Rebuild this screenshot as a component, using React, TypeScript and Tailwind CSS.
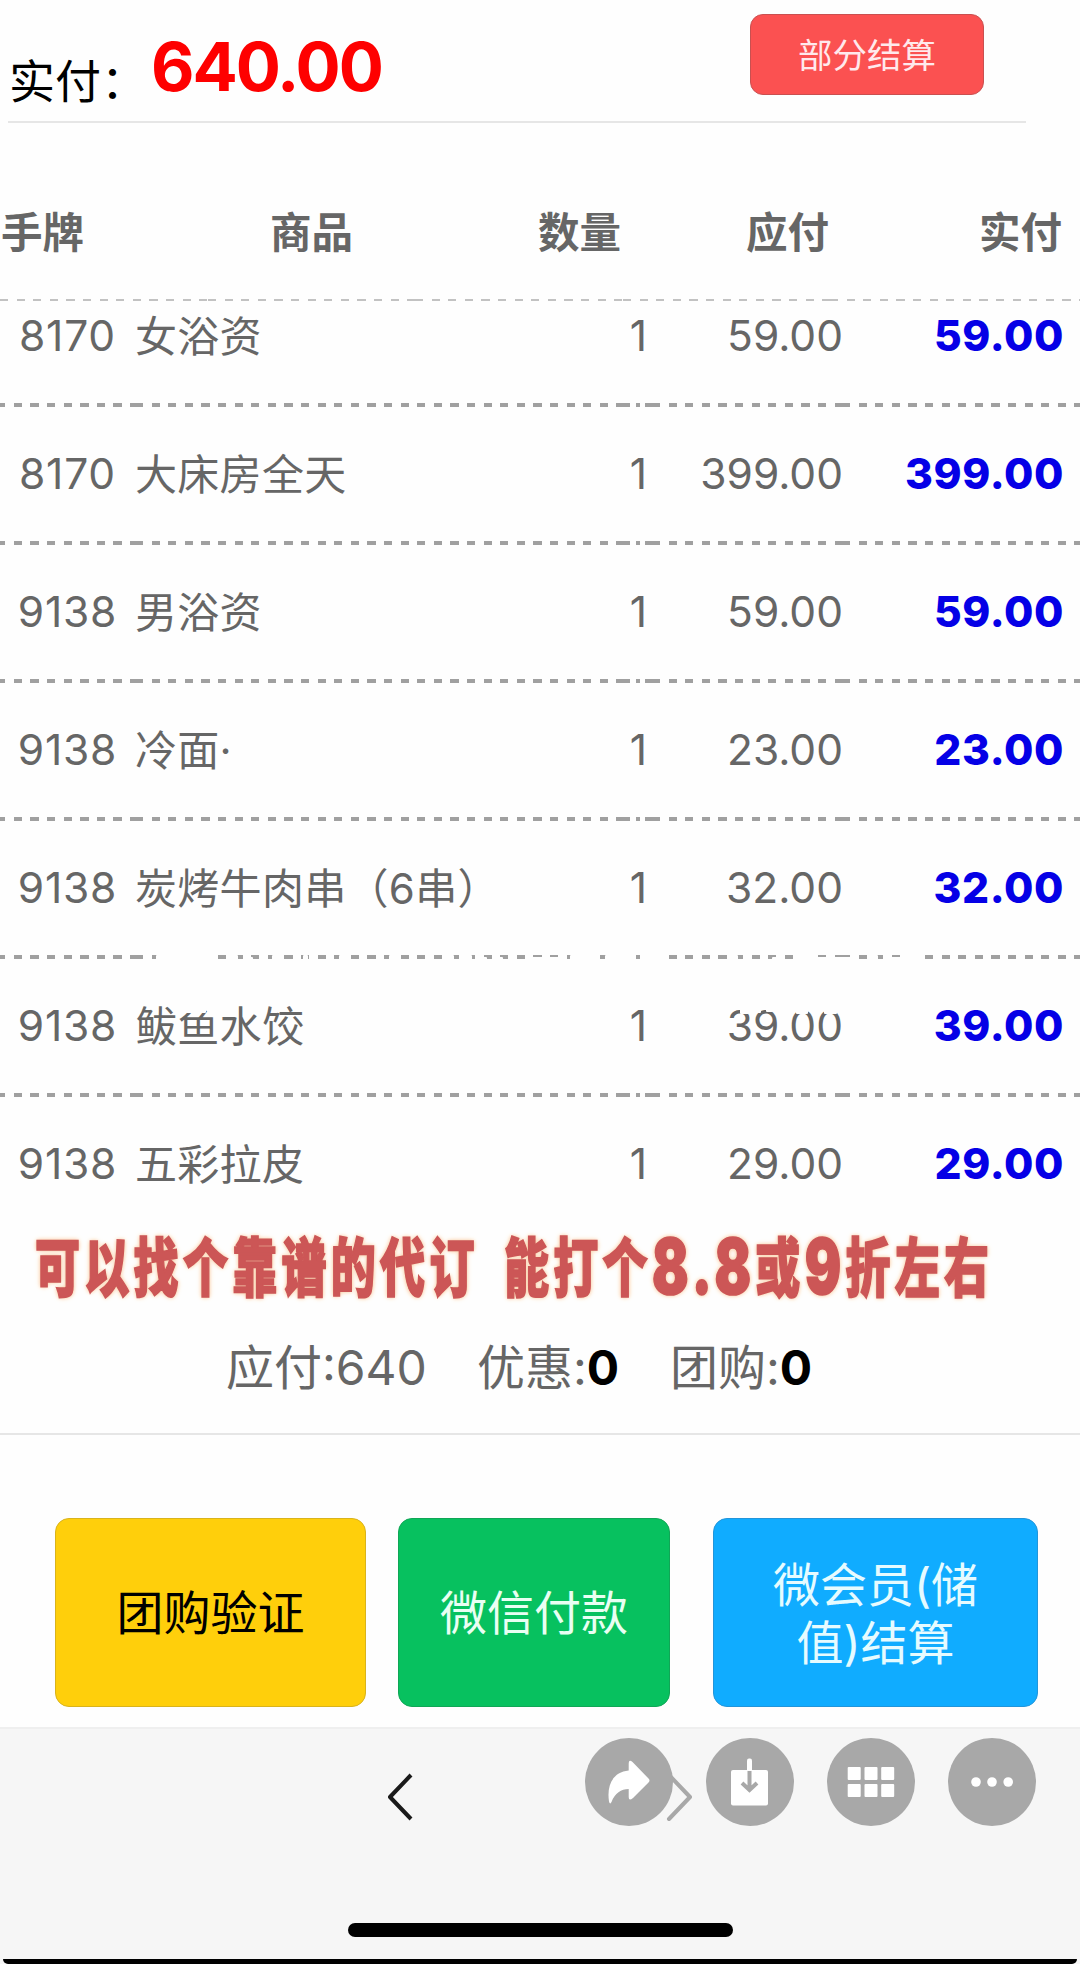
import type { ReactNode } from "react";

type ItemType = {
  tag: string;
  name: string;
  count: number;
  due: string;
  paid: string;
};

const items: Array<ItemType> = [
  { tag: "8170", name: "女浴资", count: 1, due: "59.00", paid: "59.00" },
  { tag: "8170", name: "大床房全天", count: 1, due: "399.00", paid: "399.00" },
  { tag: "9138", name: "男浴资", count: 1, due: "59.00", paid: "59.00" },
  { tag: "9138", name: "冷面·", count: 1, due: "23.00", paid: "23.00" },
  { tag: "9138", name: "炭烤牛肉串（6串）", count: 1, due: "32.00", paid: "32.00" },
  { tag: "9138", name: "鲅鱼水饺", count: 1, due: "39.00", paid: "39.00" },
  { tag: "9138", name: "五彩拉皮", count: 1, due: "29.00", paid: "29.00" },
];

// white specks lying over the list: [left, top, width, height]
const specks = [
  [156, 654, 61, 5],
  [233, 654, 5, 5],
  [247, 656, 6, 4],
  [263, 654, 5, 5],
  [272, 654, 5, 5],
  [303, 654, 5, 5],
  [339, 654, 6, 5],
  [389, 654, 6, 5],
  [449, 654, 5, 5],
  [465, 654, 7, 5],
  [475, 654, 5, 5],
  [482, 656, 5, 3],
  [498, 656, 5, 3],
  [532, 656, 32, 4],
  [570, 654, 26, 5],
  [605, 654, 31, 5],
  [640, 654, 26, 5],
  [732, 654, 6, 5],
  [772, 656, 6, 4],
  [799, 654, 12, 5],
  [815, 656, 38, 4],
  [872, 654, 6, 5],
  [883, 654, 6, 5],
  [890, 656, 12, 4],
  [904, 654, 16, 5],
  [184, 704, 22, 8],
  [740, 708, 9, 5],
  [757, 706, 4, 6],
  [766, 706, 11, 5],
  [796, 707, 12, 6],
  [824, 707, 13, 6],
];

const Dashes = () => (
  <div className="flex h-[4px] w-full">
    <div className="h-full w-[135px] bg-[repeating-linear-gradient(90deg,#a0a0a0_0_5.5px,transparent_5.5px_13.8px,#a0a0a0_13.8px_16.6px)]"></div>
    <div className="h-full w-[487px] bg-[repeating-linear-gradient(90deg,#a0a0a0_0_8.2px,transparent_8.2px_16.6px)]"></div>
    <div className="h-full w-[30px] bg-[linear-gradient(90deg,#a0a0a0_0_8px,transparent_8px_14px,#a0a0a0_14px_18px,transparent_18px_23.4px,#a0a0a0_23.4px)]"></div>
    <div className="h-full w-[189.5px] bg-[repeating-linear-gradient(90deg,#a0a0a0_0_8.2px,transparent_8.2px_16.6px)]"></div>
    <div className="h-full flex-1 bg-[repeating-linear-gradient(90deg,#a0a0a0_0_8.2px,transparent_8.2px_16.6px)]"></div>
  </div>
);

const HeadDashes = () => (
  <div className="flex h-[2px] w-full">
    {[0, 1, 2, 3, 4].map((cell) => (
      <div
        key={`head_${cell}`}
        className="h-full w-[207.5px] shrink-0 last:w-[250px] bg-[repeating-linear-gradient(90deg,#c2c2c2_0_8.2px,transparent_8.2px_16.6px)]"
      ></div>
    ))}
  </div>
);

const Item = ({ item }: { item: ItemType }) => (
  <div className="flex h-[138px] w-full shrink-0 flex-col">
    <div className="flex flex-1 items-center text-[42.5px] leading-none text-[#666]">
      <div className="w-[135px] text-center tracking-[0.8px]">{item.tag}</div>
      <div className="w-[470px] pt-[2px] text-[42px] tracking-[0.3px]">
        {item.name}
      </div>
      <div className="w-[42px] text-right">{item.count}</div>
      <div className="w-[196px] text-right">{item.due}</div>
      <div className="w-[221px] text-right font-extrabold tracking-[0.6px] text-[#0500e6]">
        {item.paid}
      </div>
    </div>
    <Dashes />
  </div>
);

const Circle = ({ children }: { children: ReactNode }) => (
  <button className="size-[88px] rounded-full bg-[#a8a8a8]">
    <svg viewBox="0 0 88 88" className="size-full" fill="#fff">
      {children}
    </svg>
  </button>
);

const App = () => {
  return (
    <div className="relative flex h-[1964px] w-[1080px] flex-col overflow-hidden bg-[#fefefe] font-['Inter','Noto_Sans_CJK_SC',sans-serif]">
      <header className="ml-2 flex h-[123px] w-[1018px] shrink-0 items-start border-b-2 border-[#e6e6e6]">
        <div className="mt-[58px] w-[143px] whitespace-nowrap pl-px text-[46px] leading-[46px] text-black">
          实付：
        </div>
        <div className="mt-[34px] text-[67px] leading-[66px] font-bold tracking-[-2px] text-[#fe0000]">
          640.00
        </div>
        <button className="mt-[14px] mr-[42px] ml-auto h-[81px] w-[234px] rounded-[13px] border border-[#c95050] bg-[#fb5151] pt-[3px] text-[34.5px] leading-none text-[#ffe9ec]">
          部分结算
        </button>
      </header>

      <div className="flex h-[176px] shrink-0 items-center pt-[46px] pl-px text-[41.5px] leading-none font-bold text-[#666]">
        <div className="w-[269px]">手牌</div>
        <div className="w-[268px]">商品</div>
        <div className="w-[208px]">数量</div>
        <div className="w-[233px]">应付</div>
        <div>实付</div>
      </div>
      <HeadDashes />

      <div className="relative flex h-[914px] shrink-0 flex-col overflow-hidden">
        <div className="-mt-8 flex flex-col">
          {items.map((item, index) => (
            <Item key={`item_${index}`} item={item} />
          ))}
        </div>
        {specks.map(([left, top, width, height], index) => (
          <div
            key={`speck_${index}`}
            className="absolute rounded-[1px] bg-[#fefefe]"
            style={{ left, top, width, height }}
          ></div>
        ))}
      </div>

      <div className="flex h-[110px] shrink-0 items-center pb-[7px] pl-[35px]">
        <div className="origin-left scale-y-[1.42] whitespace-nowrap text-[45px] leading-none font-black tracking-[4.3px] text-[#cc5656] [word-spacing:12px] [-webkit-text-stroke:1.2px_#cc5656] [text-shadow:0_0_3px_#f9cfa8,0_0_4px_#fbd9b8,0_0_5px_#fde3c8]">
          可以找个靠谱的代订 能打个
          <span className="align-[-2px] text-[54px]">8.8</span>或
          <span className="align-[-2px] text-[54px]">9</span>折左右
        </div>
      </div>

      <div className="flex h-[110px] shrink-0 items-center border-b-2 border-[#e6e6e6] pb-[22px] pl-[226px] text-[48px] leading-none text-[#666]">
        <div className="w-[251px]">应付:640</div>
        <div className="w-[193px]">
          优惠:<b className="text-black">0</b>
        </div>
        <div>
          团购:<b className="text-black">0</b>
        </div>
      </div>

      <div className="flex h-[292px] shrink-0 items-start pt-[83px] pl-[55px] text-[47px] leading-[58px]">
        <button className="h-[189px] w-[311px] rounded-[14px] border border-[#d9b31c] bg-[#ffcf0b] text-black">
          团购验证
        </button>
        <button className="ml-[32px] h-[189px] w-[272px] rounded-[14px] border border-[#10a656] bg-[#07c15f] text-[#e9fff3]">
          微信付款
        </button>
        <button className="ml-[43px] h-[189px] w-[325px] rounded-[14px] border border-[#2295da] bg-[#10acff] pt-[2px] text-[#e6fbff]">
          微会员(储
          <br />
          值)结算
        </button>
      </div>

      <footer className="relative flex flex-1 flex-col border-t-2 border-[#efefef] bg-[#f6f6f6]">
        <div className="flex h-[135px] items-center justify-between pr-[386px] pl-[386px]">
          <svg viewBox="0 0 28 50" className="h-[50px] w-[28px]" fill="none">
            <path
              d="M25 3L4 25l21 22"
              stroke="#1a1a1a"
              strokeWidth="4"
              strokeLinejoin="round"
            />
          </svg>
          <svg viewBox="0 0 28 50" className="h-[50px] w-[28px]" fill="none">
            <path
              d="M3 3l21 22L3 47"
              stroke="#a8a8a8"
              strokeWidth="4"
              strokeLinecap="round"
              strokeLinejoin="round"
            />
          </svg>
        </div>

        {/* floating actions over the browser bar */}
        <div className="absolute top-[9px] left-[585px] flex gap-[33px]">
          <Circle>
            <path d="M43.7 26Q43.7 20.5 47.5 24L63.5 40.5Q65.5 42.5 63.5 44.5L48 60Q43.7 63.5 43.7 59V51C36 51 30 55 26.5 64Q25 67 24 63.5C21.5 47 28 34 43.7 32.5Z" />
          </Circle>
          <Circle>
            <rect x="25" y="32" width="37" height="35.5" rx="2" />
            <rect x="41" y="20.5" width="5" height="13" rx="2" />
            <path
              d="M43.5 33v18M36 45l7.5 7L51 45"
              fill="none"
              stroke="#a8a8a8"
              strokeWidth="4"
            />
          </Circle>
          <Circle>
            {[20.7, 37.5, 54.2].map((x) => (
              <g key={`col_${x}`}>
                <rect x={x} y="29" width="13" height="13" rx="1" />
                <rect x={x} y="46" width="13" height="13" rx="1" />
              </g>
            ))}
          </Circle>
          <Circle>
            <circle cx="28" cy="44" r="4.8" />
            <circle cx="44" cy="44" r="4.8" />
            <circle cx="60.2" cy="44" r="4.8" />
          </Circle>
        </div>

        <div className="mt-auto mb-[22px] ml-[348px] h-[14px] w-[385px] rounded-full bg-black"></div>
        <div className="mx-[3px] h-[5px] rounded-b-[5px] bg-black"></div>
      </footer>
    </div>
  );
};

export default App;
